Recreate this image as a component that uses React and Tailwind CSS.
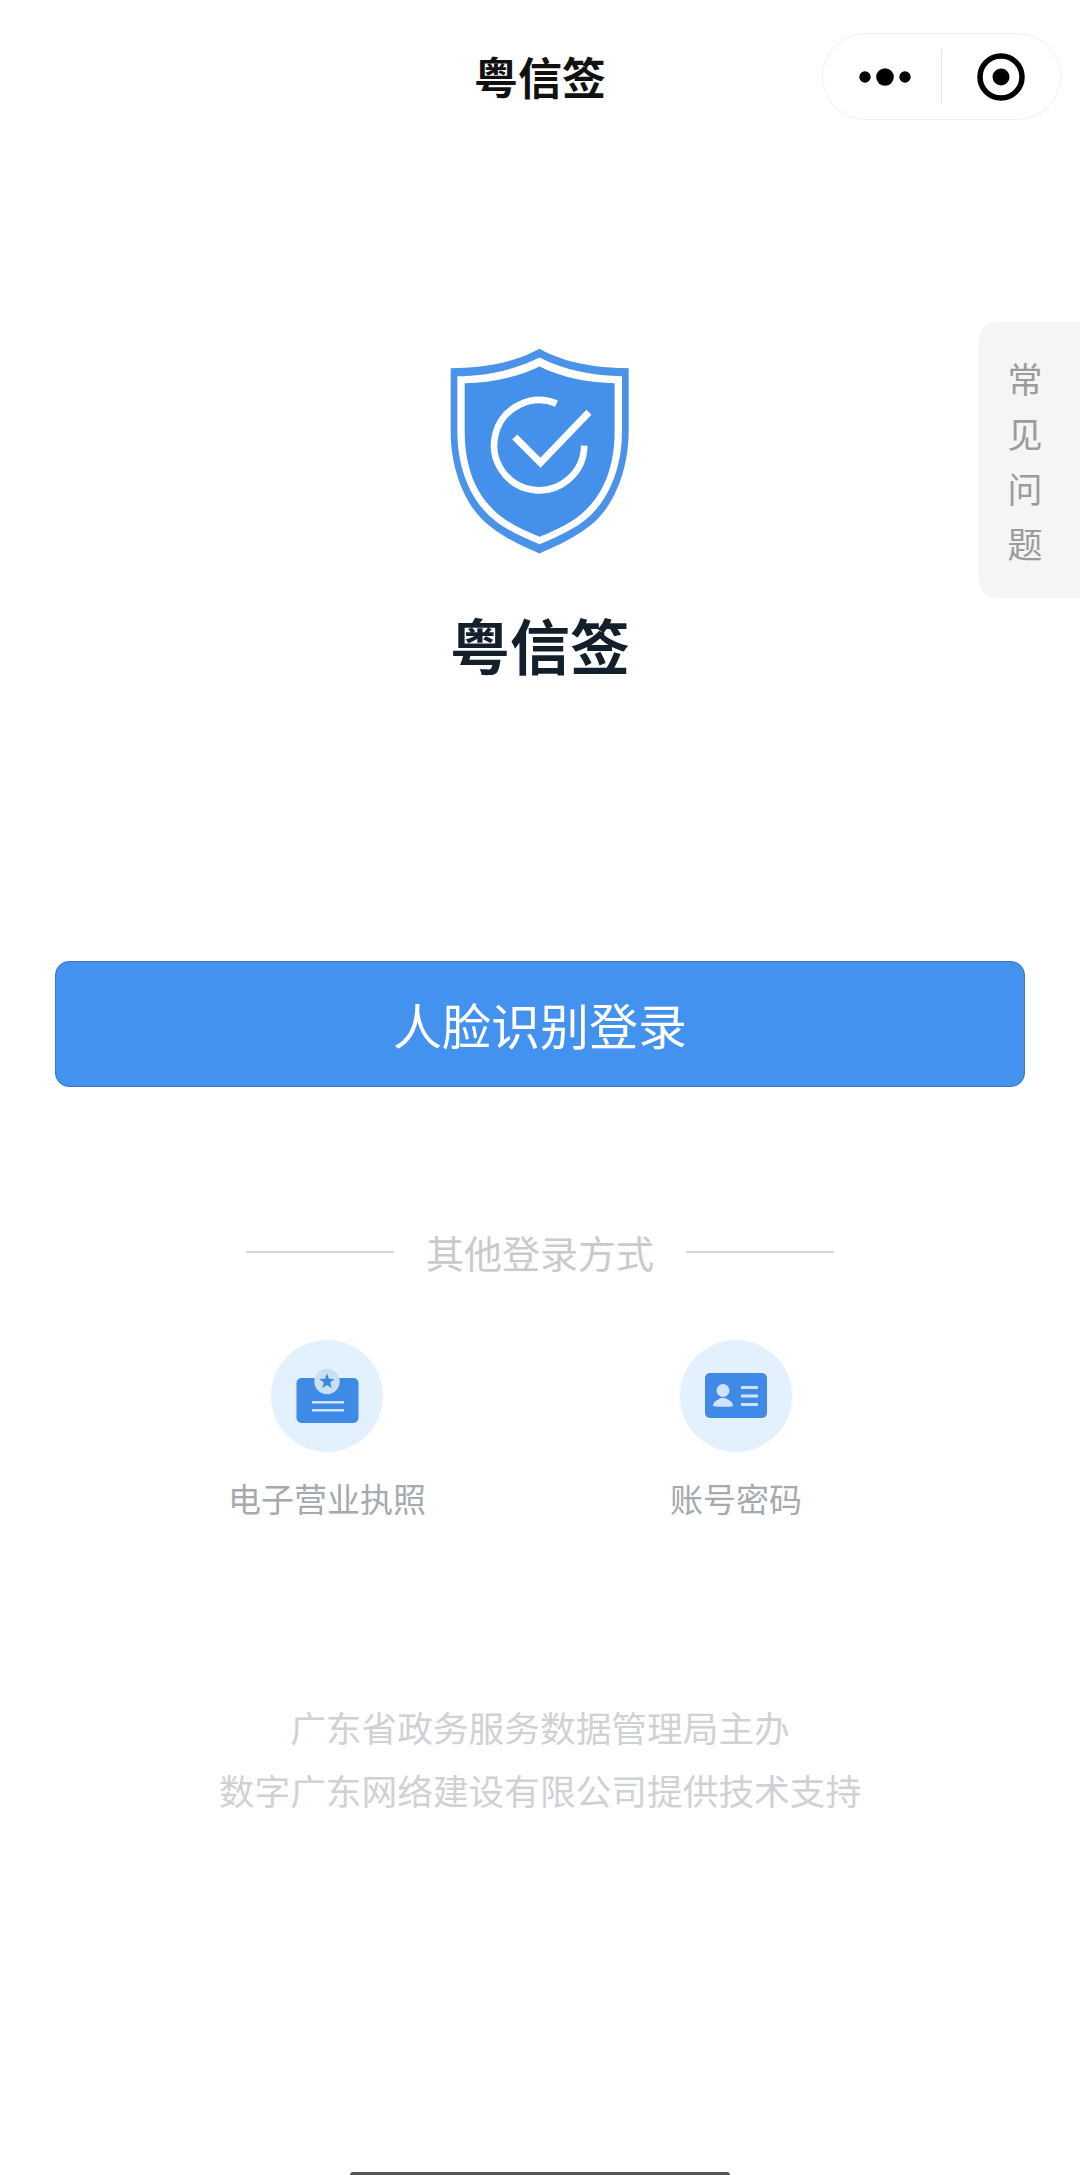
export default function App() {
  const font = { fontFamily: '"Noto Sans CJK SC", "Noto Sans", sans-serif' };
  return (
    <div style={font} className="relative w-[1080px] h-[2175px] bg-white overflow-hidden flex flex-col items-center">
      <header className="w-full h-[152px] flex items-center justify-center">
        <div className="text-[44px] leading-[60px] font-bold text-[#111111]">粤信签</div>
      </header>

      <div className="absolute left-[822px] top-[33px] w-[239px] h-[87px] rounded-full border border-[#f1f1f1] bg-white flex items-center">
        <svg width="52" height="20" viewBox="0 0 52 20" className="ml-[36px]">
          <circle cx="6" cy="10" r="5.7" fill="#000" />
          <circle cx="26" cy="10" r="8.8" fill="#000" />
          <circle cx="46" cy="10" r="5.7" fill="#000" />
        </svg>
        <div className="ml-[30px] w-px h-[54px] bg-[#e4e4e4]" />
        <svg width="50" height="50" viewBox="0 0 50 50" className="ml-[34px]">
          <circle cx="25" cy="25" r="21" fill="none" stroke="#000" strokeWidth="5.5" />
          <circle cx="25" cy="25" r="8.5" fill="#000" />
        </svg>
      </div>

      <aside className="absolute right-0 top-[322px] w-[102px] h-[276px] bg-[#f5f5f5] rounded-l-[20px] flex flex-col items-center pt-[28px] pr-[8px] text-[35px] leading-[55px] text-[#9b9b9b]">
        <span>常</span>
        <span>见</span>
        <span>问</span>
        <span>题</span>
      </aside>

      <svg width="182" height="209" viewBox="150 80 545 625" className="mt-[195px]">
        <path d="M421 85C340 130 240 143 155 143L155 330C155 440 192 527 235 580C278 633 355 670 421 698C487 670 565 633 608 580C651 527 688 440 688 330L688 143C600 143 500 130 421 85Z" fill="#4a93e8" />
        <path d="M421 111C345 150 255 166 175 167L175 330C175 435 208 512 251 564C294 616 360 645 421 670C483 645 549 616 592 564C635 512 668 435 668 330L668 167C585 166 495 150 421 111Z" fill="#fff" />
        <path d="M421 138C350 172 270 187 197 188L197 330C197 430 225 500 267 550C309 600 365 625 421 648C478 625 534 600 576 550C618 500 646 430 646 330L646 188C570 187 490 172 421 138Z" fill="#4590ea" />
        <path d="M472 249A135 135 0 1 0 555 375" fill="none" stroke="#fff" strokeWidth="20" />
        <path d="M347 349L424 426L569 275" fill="none" stroke="#fff" strokeWidth="21" />
      </svg>

      <h1 className="mt-[58px] text-[60px] leading-[60px] font-bold text-[#13202c]">粤信签</h1>

      <button className="mt-[287px] w-[970px] h-[126px] rounded-[14px] bg-[#4392f0] border border-[#3b78bd] text-white text-[49px] leading-[60px]">
        人脸识别登录
      </button>

      <div className="mt-[140px] h-[50px] flex items-center justify-center gap-[32px] text-[38px] leading-[50px] text-[#c8cbce]">
        <div className="w-[148px] h-[2px] bg-[#d4d6d8]" />
        <span>其他登录方式</span>
        <div className="w-[148px] h-[2px] bg-[#d4d6d8]" />
      </div>

      <div className="mt-[63px] w-full flex pl-[177px] gap-[109px]">
        <div className="w-[300px] flex flex-col items-center">
          <div className="w-[112px] h-[112px] rounded-full bg-[#e3f1fd] flex items-center justify-center">
            <svg width="64" height="64" viewBox="0 0 64 64">
              <rect x="1.500" y="14" width="62" height="45" rx="5" fill="#3f8ae6" />
              <circle cx="32" cy="17.500" r="12.700" fill="#c9dff6" />
              <path d="M32 9.500L34 14.750L39.600 15L35.200 18.550L36.700 24L32 20.900L27.300 24L28.800 18.550L24.400 15L30 14.750Z" fill="#3f86e0" />
              <rect x="17" y="37" width="32" height="2.500" fill="#cfe4fa" />
              <rect x="17" y="45" width="32" height="2.500" fill="#cfe4fa" />
            </svg>
          </div>
          <div className="mt-[26px] text-[33px] leading-[40px] text-[#a4aaae]">电子营业执照</div>
        </div>
        <div className="w-[300px] flex flex-col items-center">
          <div className="w-[112px] h-[112px] rounded-full bg-[#e3f1fd] flex items-center justify-center">
            <svg width="62" height="46" viewBox="0 0 62 46">
              <rect x="0" y="0" width="62" height="45" rx="5" fill="#3f8ae6" />
              <circle cx="18" cy="17.500" r="6.500" fill="#cfe4fa" />
              <path d="M8 33C8 28 13 27 15.500 25L20.500 25C23 27 28 28 28 33C28 34 8 34 8 33Z" fill="#cfe4fa" />
              <rect x="36" y="13" width="17" height="3" fill="#cfe4fa" />
              <rect x="36" y="21.500" width="17" height="3" fill="#cfe4fa" />
              <rect x="36" y="30" width="17" height="3" fill="#cfe4fa" />
            </svg>
          </div>
          <div className="mt-[26px] text-[33px] leading-[40px] text-[#a4aaae]">账号密码</div>
        </div>
      </div>

      <div className="mt-[177px] text-center text-[35.700px] leading-[63px] text-[#cfd2d5]">
        <div>广东省政务服务数据管理局主办</div>
        <div>数字广东网络建设有限公司提供技术支持</div>
      </div>

      <div className="mt-auto w-[380px] h-[3px] rounded-t-[3px] bg-[#555555]" />
    </div>
  );
}
